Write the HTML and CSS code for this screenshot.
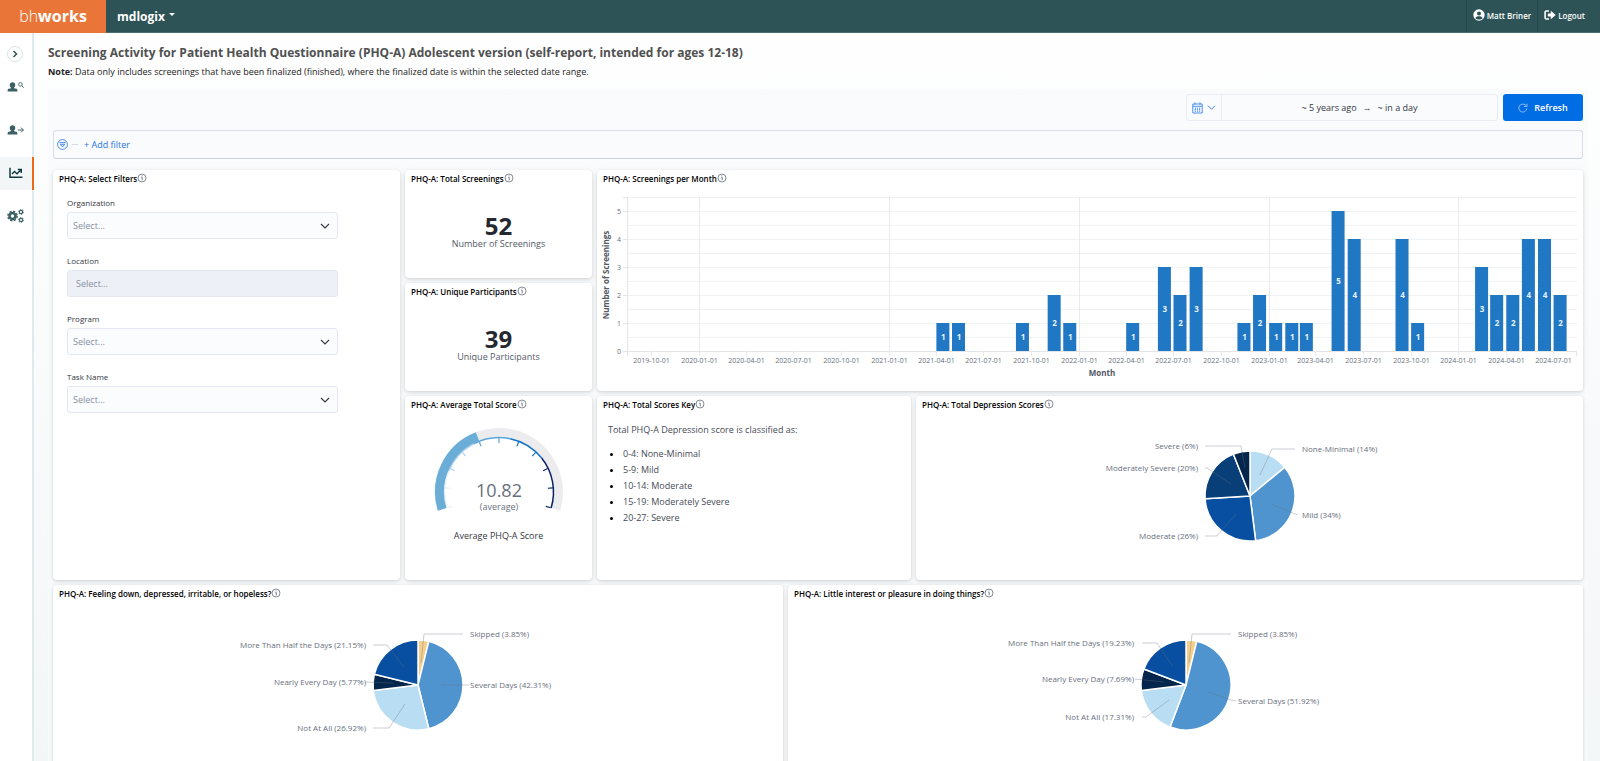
FILE: index.html
```html
<!DOCTYPE html>
<html lang="en">
<head>
    <meta charset="UTF-8">
    <meta name="viewport" content="width=device-width, initial-scale=1.0">
    <title>bhworks - Screening Activity</title>
    <link rel="stylesheet" href="styles.css">
</head>
<body>
    <svg class="sprite" aria-hidden="true">
        <symbol id="info" viewBox="0 0 10 10">
            <circle cx="5" cy="5" r="4" fill="none" stroke="currentColor" stroke-width="0.8"/>
            <path d="M4.3 4.3H5.2V7.3M5 2.5V3.3" fill="none" stroke="currentColor" stroke-width="0.9"/>
        </symbol>
        <symbol id="chevron" viewBox="0 0 10 10">
            <path d="M1 3L5 7L9 3" fill="none" stroke="currentColor" stroke-width="1.1"/>
        </symbol>
        <symbol id="person" viewBox="0 0 12 12">
            <path d="M6 .8C4.300.8 3 2 3 3.800 3 5 3.600 6.100 4.400 6.700V7.300L1.800 8C.8 8.400.6 9.300.6 11H11.400C11.400 9.300 11.200 8.400 10.200 8L7.600 7.300V6.700C8.400 6.100 9 5 9 3.800 9 2 7.700.8 6 .8Z" fill="currentColor"/>
        </symbol>
    </svg>

    <header class="topbar">
        <a class="brand" href="#">bh<b>works</b></a>
        <button class="tenant">mdlogix <span class="caret"></span></button>
        <nav class="account">
            <a href="#">
                <svg width="12" height="12" viewBox="0 0 12 12">
                    <circle cx="6" cy="6" r="5.700" fill="#fff"/>
                    <circle cx="6" cy="4.400" r="2" fill="#2d5356"/>
                    <path d="M2.500 9.200C3 7.800 4 7.200 6 7.200S9 7.800 9.500 9.200C8.500 10.200 7.300 10.600 6 10.600S3.500 10.200 2.500 9.200Z" fill="#2d5356"/>
                </svg>
                Matt Briner
            </a>
            <a href="#">
                <svg width="12" height="12" viewBox="0 0 12 12">
                    <path d="M5 2H2.500C1.500 2 1.100 2.500 1.100 3.300V8.700C1.100 9.500 1.500 10 2.500 10H5" fill="none" stroke="#fff" stroke-width="1.600"/>
                    <path d="M3.800 4.500H6.800V1.800L11.700 6L6.800 10.200V7.500H3.800Z" fill="#fff"/>
                </svg>
                Logout
            </a>
        </nav>
    </header>

    <div class="layout">
        <nav class="sidebar">
            <button class="expand" aria-label="Expand menu">
                <svg width="8" height="8" viewBox="0 0 8 8"><path d="M2.500 1L5.500 4L2.500 7" fill="none" stroke="#2d5356" stroke-width="1.500"/></svg>
            </button>
            <a class="item" href="#" aria-label="Find patient">
                <svg width="11" height="12"><use href="#person"/></svg>
                <svg class="mini top" width="6" height="6" viewBox="0 0 6 6"><path d="M3.800 3.800L5.700 5.700M4.200 2.400A1.800 1.800 0 1 1 .6 2.400A1.800 1.800 0 1 1 4.200 2.400" fill="none" stroke="currentColor" stroke-width="0.9"/></svg>
            </a>
            <a class="item" href="#" aria-label="Refer patient">
                <svg width="11" height="12"><use href="#person"/></svg>
                <svg class="mini" width="6" height="6" viewBox="0 0 6 6"><path d="M0 3H5.300M3 .6L5.400 3L3 5.400" fill="none" stroke="currentColor" stroke-width="1"/></svg>
            </a>
            <a class="item active" href="#" aria-label="Reports">
                <svg width="14" height="12" viewBox="0 0 14 12"><path d="M1 .8V10.200H13.500" fill="none" stroke="currentColor" stroke-width="1.500"/><path d="M3 7L5.500 4.500L8 6.800L11.500 3.200M8.800 2.500H12.300V6" fill="none" stroke="currentColor" stroke-width="1.400"/></svg>
            </a>
            <a class="item" href="#" aria-label="Settings">
                <svg width="17" height="14" viewBox="0 0 17 14">
                    <circle cx="5.500" cy="7" r="3" fill="none" stroke="currentColor" stroke-width="2.600"/>
                    <circle cx="5.500" cy="7" r="4.700" fill="none" stroke="currentColor" stroke-width="1.400" stroke-dasharray="2.200 1.490"/>
                    <circle cx="14" cy="3" r="1.700" fill="none" stroke="currentColor" stroke-width="1.200"/>
                    <circle cx="14" cy="3" r="2.600" fill="none" stroke="currentColor" stroke-width="0.8" stroke-dasharray="1.200 1.520"/>
                    <circle cx="14" cy="11" r="1.700" fill="none" stroke="currentColor" stroke-width="1.200"/>
                    <circle cx="14" cy="11" r="2.600" fill="none" stroke="currentColor" stroke-width="0.8" stroke-dasharray="1.200 1.520"/>
                </svg>
            </a>
        </nav>

        <main>
            <h1>Screening Activity for Patient Health Questionnaire (PHQ-A) Adolescent version (self-report, intended for ages 12-18)</h1>
            <p class="note"><b>Note:</b> Data only includes screenings that have been finalized (finished), where the finalized date is within the selected date range.</p>

            <div class="dashboard">
                <div class="toolbar">
                    <div class="date-picker">
                        <button class="quick" aria-label="Date quick select">
                            <svg width="11" height="12" viewBox="0 0 11 12">
                                <path d="M.8 2H10.200V11H.8ZM.8 4.300H10.200M3 .4V2.500M8 .4V2.500" fill="none" stroke="currentColor" stroke-width="0.9"/>
                                <path d="M2.800 6.200H8.500M2.800 7.700H8.500M2.800 9.200H8.500" fill="none" stroke="currentColor" stroke-width="1" stroke-dasharray="1.200 0.9"/>
                            </svg>
                            <svg width="9" height="9"><use href="#chevron"/></svg>
                        </button>
                        <div class="range">
                            <button>~ 5 years ago</button>
                            <span>→</span>
                            <button>~ in a day</button>
                        </div>
                    </div>
                    <button class="refresh">
                        <svg width="10" height="10" viewBox="0 0 10 10"><path d="M8.800 5.500A4 4 0 1 1 7.500 2.100L8.800 3.300M9 .6V3.500H6" fill="none" stroke="#8ebcf4" stroke-width="1"/></svg>
                        Refresh
                    </button>
                </div>

                <div class="filter-bar">
                    <svg width="11" height="11" viewBox="0 0 11 11"><circle cx="5.500" cy="5.500" r="4.900" fill="none" stroke="currentColor" stroke-width="0.8"/><path d="M2.300 3.600H8.700M3.300 5.300H7.700L5.500 8Z" fill="none" stroke="currentColor" stroke-width="0.8"/></svg>
                    <span class="dash"></span>
                    <button>+ Add filter</button>
                </div>

                <div class="grid">
                    <section class="panel filters">
                        <h2>PHQ-A: Select Filters <svg><use href="#info"/></svg></h2>
                        <form>
                            <label for="org">Organization</label>
                            <div class="field"><select id="org"><option>Select...</option></select><svg><use href="#chevron"/></svg></div>
                            <label for="loc">Location</label>
                            <div class="field"><select id="loc" disabled><option>Select...</option></select></div>
                            <label for="prog">Program</label>
                            <div class="field"><select id="prog"><option>Select...</option></select><svg><use href="#chevron"/></svg></div>
                            <label for="task">Task Name</label>
                            <div class="field"><select id="task"><option>Select...</option></select><svg><use href="#chevron"/></svg></div>
                        </form>
                    </section>

                    <section class="panel">
                        <h2>PHQ-A: Total Screenings <svg><use href="#info"/></svg></h2>
                        <div class="metric"><strong>52</strong><span>Number of Screenings</span></div>
                    </section>

                    <section class="panel per-month">
                        <h2>PHQ-A: Screenings per Month <svg><use href="#info"/></svg></h2>
                        <svg class="bars" id="bars" viewBox="0 0 986 204"></svg>
                    </section>

                    <section class="panel">
                        <h2>PHQ-A: Unique Participants <svg><use href="#info"/></svg></h2>
                        <div class="metric"><strong>39</strong><span>Unique Participants</span></div>
                    </section>

                    <section class="panel">
                        <h2>PHQ-A: Average Total Score <svg><use href="#info"/></svg></h2>
                        <div class="gauge">
                            <svg id="gauge" width="140" height="90" viewBox="-70 -66 140 90"></svg>
                            <span>Average PHQ-A Score</span>
                        </div>
                    </section>

                    <section class="panel">
                        <h2>PHQ-A: Total Scores Key <svg><use href="#info"/></svg></h2>
                        <div class="key">
                            <p>Total PHQ-A Depression score is classified as:</p>
                            <ul>
                                <li>0-4: None-Minimal</li>
                                <li>5-9: Mild</li>
                                <li>10-14: Moderate</li>
                                <li>15-19: Moderately Severe</li>
                                <li>20-27: Severe</li>
                            </ul>
                        </div>
                    </section>

                    <section class="panel">
                        <h2>PHQ-A: Total Depression Scores <svg><use href="#info"/></svg></h2>
                        <svg class="pie" id="pie-total" viewBox="-200 -60 400 120"></svg>
                    </section>
                </div>

                <div class="grid questions">
                    <section class="panel">
                        <h2>PHQ-A: Feeling down, depressed, irritable, or hopeless? <svg><use href="#info"/></svg></h2>
                        <svg class="pie" id="pie-down" viewBox="-200 -60 400 120"></svg>
                    </section>
                    <section class="panel">
                        <h2>PHQ-A: Little interest or pleasure in doing things? <svg><use href="#info"/></svg></h2>
                        <svg class="pie" id="pie-interest" viewBox="-200 -60 400 120"></svg>
                    </section>
                </div>
            </div>
        </main>
    </div>
    <script src="script.js"></script>
</body>
</html>
```
FILE: styles.css
```css
*{
    margin: 0;
    padding: 0;
    box-sizing: border-box;
}
body{
    font-family: "Open Sans", "Noto Sans", sans-serif;
    font-size: 9px;
    color: #343741;
    background: linear-gradient(#ffffff, #f3f6f7);
}
button{
    font: inherit;
    color: inherit;
    background: none;
    border: none;
}
a{
    color: inherit;
    text-decoration: none;
}
.sprite{
    display: none;
}

/* top bar */
.topbar{
    display: flex;
    height: 33px;
    background-color: #2d5356;
    border-bottom: 1px solid #4c6c6f;
    color: #fff;
}
.brand{
    width: 106px;
    height: 33px;
    background-color: #e97638;
    font-size: 16px;
    font-weight: 300;
    line-height: 32px;
    text-align: center;
}
.brand b{
    font-weight: 700;
}
.tenant{
    display: flex;
    align-items: center;
    gap: 4px;
    margin-left: 11px;
    font-size: 12px;
    font-weight: 700;
}
.caret{
    border: 3px solid transparent;
    border-top-color: #fff;
    border-bottom: none;
    margin-bottom: 4px;
}
.account{
    display: flex;
    margin-left: auto;
}
.account a{
    display: flex;
    align-items: center;
    gap: 2px;
    padding: 0 6px 2px 6px;
    border-left: 1px solid #23464a;
    font-size: 8px;
    font-weight: 600;
}
.account a:last-child{
    padding-right: 15px;
}

/* sidebar */
.layout{
    display: flex;
}
.sidebar{
    width: 34px;
    flex-shrink: 0;
    display: flex;
    flex-direction: column;
    gap: 10px;
    border-right: 2px solid #deebec;
    background-color: #fff;
    color: #3a6064;
}
.expand{
    width: 16px;
    height: 16px;
    margin: 13px 7px -1px;
    border: 1px solid #d9e4e4;
    border-radius: 50%;
    display: flex;
    align-items: center;
    justify-content: center;
}
.item{
    height: 33px;
    margin-right: -2px;
    padding: 0 3px 2px 0;
    display: flex;
    align-items: center;
    justify-content: center;
}
.item.active{
    padding-right: 1px;
    background-color: #f2f6f7;
    border-right: 2px solid #ec6a15;
    color: #123b40;
}
.mini.top{
    margin-bottom: 4px;
}

/* page */
main{
    flex: 1;
    min-width: 0;
    padding: 10px 12px 0 14px;
}
h1{
    font-size: 12px;
    font-weight: 700;
    line-height: 20px;
    color: #505050;
}
.note{
    margin-top: 2px;
    line-height: 14px;
    color: #222;
}
.dashboard{
    margin-top: 10px;
    padding: 5px;
    background-color: #fafbfd;
}
.toolbar{
    display: flex;
    justify-content: flex-end;
    gap: 5px;
    height: 27px;
}
.date-picker{
    display: flex;
    width: 312px;
    border: 1px solid #e9edf3;
    border-radius: 3px;
}
.quick{
    width: 35px;
    border-right: 1px solid #e9edf3;
    display: flex;
    align-items: center;
    justify-content: center;
    gap: 4px;
    color: #3b86ea;
}
.range{
    flex: 1;
    display: flex;
    align-items: center;
    justify-content: center;
    gap: 6px;
}
.refresh{
    width: 80px;
    border-radius: 3px;
    background-color: #006de4;
    color: #fff;
    font-weight: 600;
    display: flex;
    align-items: center;
    justify-content: center;
    gap: 6px;
}
.filter-bar{
    height: 29px;
    margin-top: 9px;
    padding: 0 3px;
    border: 1px solid #d8dfe9;
    border-bottom-color: #ccd4e0;
    border-radius: 3px;
    display: flex;
    align-items: center;
    gap: 4px;
    color: #2573e6;
}
.dash{
    width: 6px;
    height: 1px;
    margin-right: 2px;
    background-color: #d8dce2;
}

/* panels */
.grid{
    display: grid;
    grid-template-columns: 347fr 187fr 314fr 667fr;
    grid-template-rows: 108px 108px 184px;
    gap: 5px;
    margin-top: 11px;
}
.questions{
    grid-template-columns: 730fr 795fr;
    grid-template-rows: 184px;
    margin-top: 5px;
}
.panel{
    display: flex;
    flex-direction: column;
    min-width: 0;
    background-color: #fff;
    border-radius: 4px;
    box-shadow: 0 1px 3px rgba(30, 35, 40, 0.16), 0 2px 8px rgba(30, 35, 40, 0.06);
}
.filters{
    grid-row: span 3;
}
.per-month{
    grid-column: span 2;
    grid-row: span 2;
}
h2{
    display: flex;
    align-items: center;
    height: 16px;
    padding-left: 6px;
    font-size: 8px;
    font-weight: 600;
    color: #000;
}
h2 svg{
    width: 10px;
    height: 10px;
    color: #69707d;
}
.filters form{
    width: 82%;
    padding: 10px 0 0 14px;
}
.filters label{
    display: block;
    height: 14px;
    margin-bottom: 2px;
    font-size: 8px;
    line-height: 14px;
}
.field{
    position: relative;
    margin-bottom: 15px;
}
.field select{
    appearance: none;
    display: block;
    width: 100%;
    height: 27px;
    padding: 0 5px;
    border: 1px solid #e4e7f1;
    border-radius: 3px;
    background-color: #fbfcfd;
    font: inherit;
    color: #8790a3;
    opacity: 1;
}
.field select:disabled{
    padding: 0 8px;
    background-color: #edf0f6;
}
.field svg{
    position: absolute;
    right: 8px;
    top: 9px;
    width: 10px;
    height: 10px;
    pointer-events: none;
}
.metric{
    flex: 1;
    display: flex;
    flex-direction: column;
    align-items: center;
    justify-content: center;
    color: #535966;
}
.metric strong{
    font-size: 24px;
    line-height: 24px;
    color: #25282f;
}
.metric span{
    line-height: 12px;
}
.bars{
    width: 100%;
}
.bars text{
    font-size: 7px;
    fill: #69707d;
}
.bars .value{
    font-size: 8px;
    font-weight: 700;
    fill: #e9f3fc;
}
.bars .axis-title{
    font-size: 8px;
    font-weight: 700;
    fill: #535966;
}
.gauge{
    display: flex;
    flex-direction: column;
    align-items: center;
    gap: 13px;
    padding-top: 14px;
}
.gauge text{
    fill: #69707d;
}
.gauge .big{
    font-size: 18px;
}
.key{
    padding: 11px;
    color: #474b57;
}
.key p{
    line-height: 14px;
}
.key ul{
    margin-top: 9px;
    padding-left: 15px;
    line-height: 16px;
}
.key li::marker{
    color: #000;
}
.pie{
    width: 400px;
    height: 120px;
    margin: auto;
}
.pie text{
    font-size: 8px;
    fill: #69707d;
}
```
FILE: script.js
```js
const NS = "http://www.w3.org/2000/svg";

const add = (parent, tag, attrs, text) => {
    const el = document.createElementNS(NS, tag);
    for (let key in attrs) el.setAttribute(key, attrs[key]);
    if (text !== undefined) el.textContent = text;
    parent.appendChild(el);
    return el;
};

// ---- screenings per month ----
const counts = {
    "2021-04": 1, "2021-05": 1, "2021-09": 1, "2021-11": 2, "2021-12": 1,
    "2022-04": 1, "2022-06": 3, "2022-07": 2, "2022-08": 3, "2022-11": 1, "2022-12": 2,
    "2023-01": 1, "2023-02": 1, "2023-03": 1, "2023-05": 5, "2023-06": 4, "2023-09": 4, "2023-10": 1,
    "2024-02": 3, "2024-03": 2, "2024-04": 2, "2024-05": 4, "2024-06": 4, "2024-07": 2,
};

const drawBars = () => {
    const svg = document.querySelector("#bars");
    const left = 30, right = 980, top = 11, bottom = 165, unit = 28;
    const start = Date.parse("2019-08-15"), end = Date.parse("2024-08-15");
    const x = (day) => left + (Date.parse(day) - start) / (end - start) * (right - left);

    for (let v = 0; v <= 5.5; v += 0.5) {
        const y = bottom - v * unit + 0.5;
        add(svg, "line", { x1: left, x2: right, y1: y, y2: y, stroke: v ? "#f0f1f3" : "#e3e5e9" });
        if (v % 1 === 0) {
            add(svg, "line", { x1: left - 4, x2: left, y1: y, y2: y, stroke: "#e3e5e9" });
            add(svg, "text", { x: left - 6, y: y + 2, "text-anchor": "end" }, v);
        }
    }
    add(svg, "path", { d: `M${left - 4} ${top + 0.5}H${left + 0.5}V${bottom + 5}M${right - 0.5} ${bottom}v5`, fill: "none", stroke: "#e3e5e9" });

    for (let year = 2019; year <= 2024; year++) {
        for (let month of ["01", "04", "07", "10"]) {
            const day = `${year}-${month}-01`;
            if (day < "2019-10" || day > "2024-08") continue;
            const px = Math.floor(x(day)) + 0.5;
            add(svg, "line", { x1: px, x2: px, y1: month === "01" ? top : bottom, y2: bottom + 5, stroke: "#e8eaed" });
            add(svg, "text", { x: px, y: 177, "text-anchor": "middle" }, day);
        }
    }

    for (let month in counts) {
        const n = counts[month];
        const px = x(month + "-01");
        add(svg, "rect", { x: px, y: bottom - n * unit, width: 13, height: n * unit, fill: "#2077c3" });
        add(svg, "text", { class: "value", x: px + 7, y: bottom - n * unit / 2 + 3, "text-anchor": "middle" }, n);
    }

    add(svg, "text", { class: "axis-title", x: 505, y: 190, "text-anchor": "middle" }, "Month");
    add(svg, "text", { class: "axis-title", transform: "translate(12 89) rotate(-90)", "text-anchor": "middle" }, "Number of Screenings");
};

// ---- average gauge ----
const drawGauge = () => {
    const svg = document.querySelector("#gauge");
    const point = (value, r) => {
        const a = (197 - value / 27 * 214) * Math.PI / 180;
        return `${r * Math.cos(a)} ${-r * Math.sin(a)}`;
    };
    const arc = (from, to, r, width, color) => {
        const large = (to - from) / 27 * 214 > 180 ? 1 : 0;
        add(svg, "path", { d: `M${point(from, r)}A${r} ${r} 0 ${large} 1 ${point(to, r)}`, fill: "none", stroke: color, "stroke-width": width });
    };
    const bands = [[0, 5, "#e6eff8"], [5, 10, "#b3d2ec"], [10, 15, "#5ba6da"], [15, 20, "#1271c2"], [20, 27, "#0b2268"]];

    arc(0, 27, 59.5, 9, "#ececee");
    for (let [from, to, color] of bands) arc(from, to, 54.5, 1.5, color);
    for (let i = 0; i <= 10; i++) {
        const v = i * 2.7;
        const color = bands.find((b) => v <= b[1])[2];
        add(svg, "path", { d: `M${point(v, 54)}L${point(v, 49)}`, stroke: color, "stroke-width": 1.2 });
    }
    arc(0, 10.82, 59.5, 9, "#6aaed8");
    add(svg, "text", { class: "big", y: 5, "text-anchor": "middle" }, "10.82");
    add(svg, "text", { y: 18, "text-anchor": "middle" }, "(average)");
};

// ---- pies: [label, percent, colour, link line, label y] ----
const drawPie = (id, slices) => {
    const svg = document.querySelector(id);
    const r = 45;
    let turn = 0;
    for (let [, percent, color] of slices) {
        const a = turn * 2 * Math.PI;
        turn += percent / 100;
        const b = turn * 2 * Math.PI;
        add(svg, "path", {
            d: `M0 0L${r * Math.sin(a)} ${-r * Math.cos(a)}A${r} ${r} 0 ${percent > 50 ? 1 : 0} 1 ${r * Math.sin(b)} ${-r * Math.cos(b)}Z`,
            fill: color, stroke: "#fff", "stroke-width": 1.5,
        });
    }
    for (let [label, percent, , line, y] of slices) {
        const side = line.startsWith("-") ? -1 : 1;
        add(svg, "polyline", { points: line, fill: "none", stroke: "#69707d", "stroke-opacity": 0.35, "stroke-width": 1 });
        add(svg, "text", { x: 52 * side, y: y + 3, "text-anchor": side < 0 ? "end" : "start" }, `${label} (${percent}%)`);
    }
};

drawBars();
drawGauge();
drawPie("#pie-total", [
    ["None-Minimal", 14, "#b9ddf3", "10,-21 22,-47 45,-47", -47],
    ["Mild", 34, "#4f94ce", "21,8 45,18 48,19", 19],
    ["Moderate", 26, "#084fa1", "-14,18 -33,40 -45,40", 40],
    ["Moderately Severe", 20, "#083f78", "-19,-12 -43,-28 -45,-28", -28],
    ["Severe", 6, "#04264c", "-5,-28 -9,-50 -45,-50", -50],
]);
drawPie("#pie-down", [
    ["Skipped", 3.85, "#f2cf8b", "3,-22 6,-51 45,-51", -51],
    ["Several Days", 42.31, "#4f94ce", "23,0 51,0", 0],
    ["Not At All", 26.92, "#b9ddf3", "-13,19 -29,43 -45,43", 43],
    ["Nearly Every Day", 5.77, "#04264c", "-25,-2 -52,-3", -3],
    ["More Than Half the Days", 21.15, "#084fa1", "-14,-18 -31,-40 -45,-40", -40],
]);
drawPie("#pie-interest", [
    ["Skipped", 3.85, "#f2cf8b", "3,-22 6,-51 45,-51", -51],
    ["Several Days", 51.92, "#4f94ce", "22,7 45,15 50,16", 16],
    ["Not At All", 17.31, "#b9ddf3", "-17,15 -40,32 -44,32", 32],
    ["Nearly Every Day", 7.69, "#04264c", "-22,-3 -51,-6", -6],
    ["More Than Half the Days", 19.23, "#084fa1", "-13,-18 -29,-42 -44,-42", -42],
]);
```
